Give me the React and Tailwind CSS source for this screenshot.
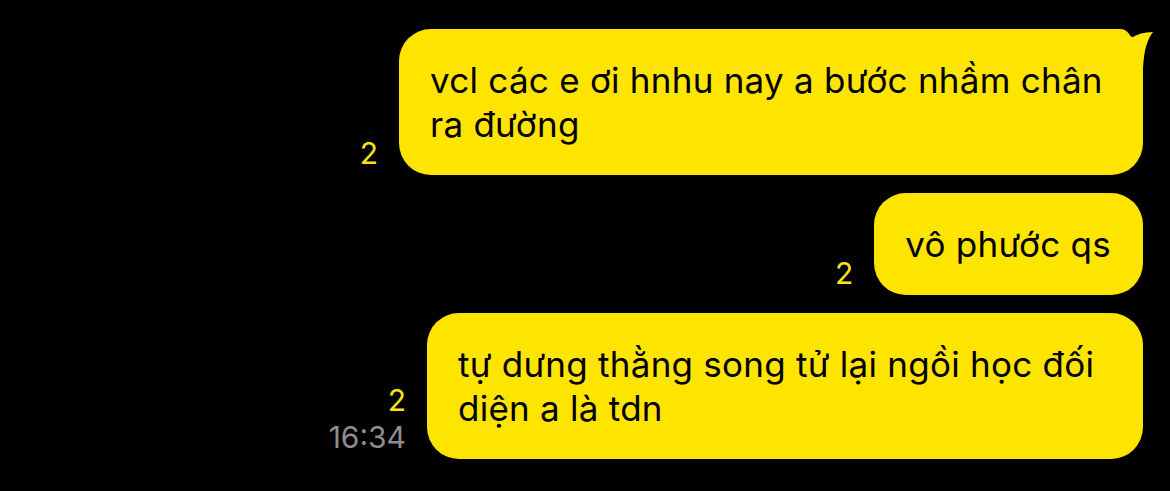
import React from 'react';

const messages = [
  { id: 1, text: 'vcl các e ơi hnhu nay a bước nhầm chân ra đường', width: 'w-[744px]', tail: true },
  { id: 2, text: 'vô phước qs', width: '' },
  { id: 3, text: 'tự dưng thằng song tử lại ngồi học đối diện a là tdn', width: 'w-[716px]', time: '16:34' },
];

const Tail = () => (
  <svg
    className="absolute -right-[14px] top-0"
    width="47"
    height="60"
    viewBox="0 0 47 60"
  >
    <path d="M0 0 L10 0 Q18 0 21 9 Q30 3 43 3 Q34 14 33 40 L33 60 L0 60 Z" fill="#fee500" />
  </svg>
);

const App = () => {
  return (
    <div
      className="w-[1170px] h-[491px] bg-black pt-[29px] pr-[27px] flex flex-col items-end gap-[18px]"
      style={{ fontFamily: 'Inter, "Liberation Sans", sans-serif' }}
    >
      {messages.map((msg) => (
        <div key={msg.id} className="flex items-end gap-[21px]">
          <div className="flex flex-col items-end pb-[3px] leading-[37px] text-[30px]">
            <span className="text-[#f5e41c]">2</span>
            {msg.time && <span className="text-[#8e8e8e]">{msg.time}</span>}
          </div>
          <div
            className={`relative bg-[#fee500] text-black rounded-[32px] pl-[31px] pr-[32px] py-[29px] text-[35px] leading-[44px] tracking-[0.25px] ${msg.width}`}
          >
            {msg.tail && <Tail />}
            <span className="relative">{msg.text}</span>
          </div>
        </div>
      ))}
    </div>
  );
};

export default App;
